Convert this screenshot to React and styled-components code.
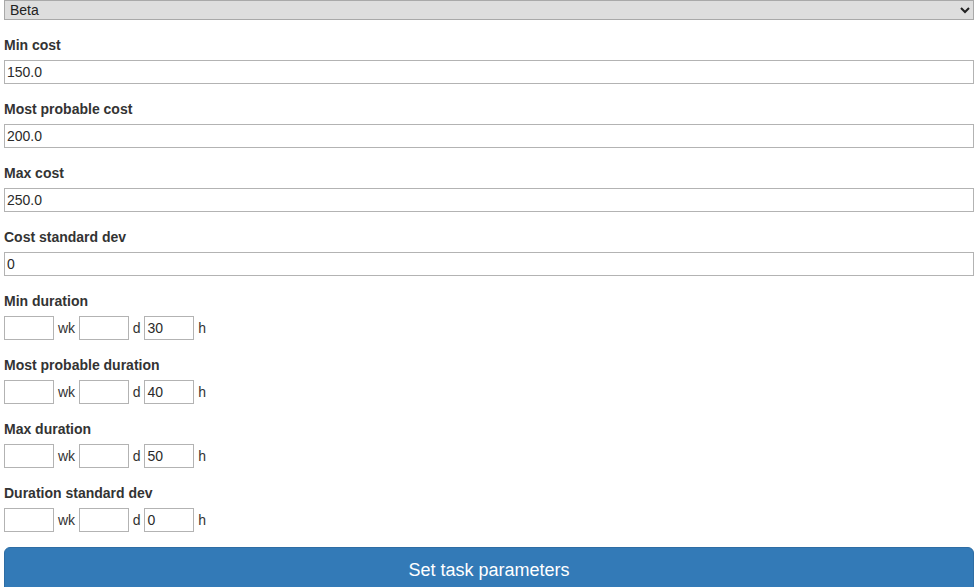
import React from "react";
import styled, { createGlobalStyle } from "styled-components";

const Global = createGlobalStyle`
  html, body { margin: 0; padding: 0; background: #fff; }
  body { font-family: "Liberation Sans", Arial, sans-serif; color: #333; }
  * { box-sizing: border-box; }
`;

const Page = styled.div`
  padding: 0 4px;
`;

const Select = styled.select`
  display: block;
  width: 100%;
  height: 20px;
  margin: 0;
  font-family: "Liberation Sans", Arial, sans-serif;
  font-size: 14px;
  color: #222;
  background-color: #dedede;
  border: 1px solid #a9a9a9;
  border-radius: 0;
  padding: 0 0 0 1px;
`;

const Field = styled.div`
  margin-top: 15px;
`;

const Label = styled.label`
  display: block;
  font-size: 14px;
  font-weight: bold;
  line-height: 20px;
  margin-bottom: 5px;
  color: #333;
`;

const TextInput = styled.input`
  display: ${(p) => (p.$small ? "inline-block" : "block")};
  vertical-align: top;
  width: ${(p) => (p.$small ? "50px" : "100%")};
  height: 24px;
  margin: 0;
  padding: 1px 2px;
  font-family: "Liberation Sans", Arial, sans-serif;
  font-size: 14px;
  color: #2a2a2a;
  background: #fff;
  border: 1px solid #b3b3b3;
  border-radius: 0;
  outline: none;
`;

const DurationRow = styled.div`
  font-size: 14px;
  line-height: 24px;
  height: 24px;
  white-space: nowrap;
  color: #333;
`;

const Button = styled.button`
  display: block;
  width: 100%;
  margin-top: 15px;
  padding: 10px 16px;
  font-family: "Liberation Sans", Arial, sans-serif;
  font-size: 18px;
  line-height: 24px;
  color: #fff;
  background: #337ab7;
  border: 1px solid #2e6da4;
  border-radius: 6px;
  cursor: pointer;
`;

const costs = [
  ["Min cost", "150.0"],
  ["Most probable cost", "200.0"],
  ["Max cost", "250.0"],
  ["Cost standard dev", "0"],
];

const durations = [
  ["Min duration", "30"],
  ["Most probable duration", "40"],
  ["Max duration", "50"],
  ["Duration standard dev", "0"],
];

export default function App() {
  return (
    <>
      <Global />
      <Page>
        <Select defaultValue="Beta">
          <option>Normal</option>
          <option>Beta</option>
          <option>Triangular</option>
        </Select>
        {costs.map(([label, value]) => (
          <Field key={label}>
            <Label>{label}</Label>
            <TextInput type="text" defaultValue={value} />
          </Field>
        ))}
        {durations.map(([label, h]) => (
          <Field key={label}>
            <Label>{label}</Label>
            <DurationRow>
              <TextInput $small type="text" defaultValue="" />{" wk "}
              <TextInput $small type="text" defaultValue="" />{" d "}
              <TextInput $small type="text" defaultValue={h} />{" h"}
            </DurationRow>
          </Field>
        ))}
        <Button>Set task parameters</Button>
      </Page>
    </>
  );
}
